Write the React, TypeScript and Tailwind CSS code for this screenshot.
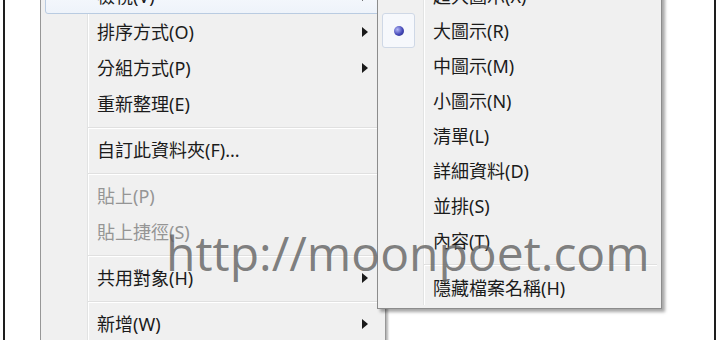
type Row =
  | { kind: 'item'; label: string; arrow?: boolean; disabled?: boolean; hot?: boolean; checked?: boolean }
  | { kind: 'sep' };

const MAIN: Row[] = [
  { kind: 'item', label: '檢視(V)', arrow: true, hot: true },
  { kind: 'item', label: '排序方式(O)', arrow: true },
  { kind: 'item', label: '分組方式(P)', arrow: true },
  { kind: 'item', label: '重新整理(E)' },
  { kind: 'sep' },
  { kind: 'item', label: '自訂此資料夾(F)...' },
  { kind: 'sep' },
  { kind: 'item', label: '貼上(P)', disabled: true },
  { kind: 'item', label: '貼上捷徑(S)', disabled: true },
  { kind: 'sep' },
  { kind: 'item', label: '共用對象(H)', arrow: true },
  { kind: 'sep' },
  { kind: 'item', label: '新增(W)', arrow: true },
];

const VIEW: Row[] = [
  { kind: 'item', label: '超大圖示(X)' },
  { kind: 'item', label: '大圖示(R)', checked: true },
  { kind: 'item', label: '中圖示(M)' },
  { kind: 'item', label: '小圖示(N)' },
  { kind: 'item', label: '清單(L)' },
  { kind: 'item', label: '詳細資料(D)' },
  { kind: 'item', label: '並排(S)' },
  { kind: 'item', label: '內容(T)' },
  { kind: 'sep' },
  { kind: 'item', label: '隱藏檔案名稱(H)' },
];

function Arrow() {
  return (
    <svg width="6" height="10" viewBox="0 0 6 10" className="shrink-0">
      <path d="M0 0 L6 5 L0 10 Z" fill="#1a1a1a" />
    </svg>
  );
}

function Radio() {
  return (
    <div className="w-[33px] h-full rounded-[3px] border border-[#cfd8e6] bg-[#f6f8fc] flex items-center justify-center">
      <span className="w-[10px] h-[10px] rounded-full bg-[radial-gradient(circle_at_35%_35%,#b4b8f7,#4549b8_55%,#24277a)]" />
    </div>
  );
}

function MenuRows({ rows, itemH, sepH, gutter }: { rows: Row[]; itemH: string; sepH: string; gutter: string }) {
  return (
    <>
      {rows.map((r, i) => {
        if (r.kind === 'sep') {
          return (
            <div key={i} className={`flex ${sepH}`}>
              <div className={`${gutter} shrink-0`} />
              <div className="flex-1 flex items-center border-l border-[#e2e3e3] shadow-[inset_1px_0_0_#ffffff]">
                <div className="w-full h-px bg-[#e0e0e0] shadow-[0_1px_0_#ffffff]" />
              </div>
            </div>
          );
        }
        if (r.hot) {
          return (
            <div
              key={i}
              className={`flex items-center ${itemH} rounded-[3px] border border-[#b9cbe1] bg-gradient-to-b from-[#fbfcfe] to-[#eef3fa]`}
            >
              <div className={`${gutter} shrink-0`} />
              <div className="flex-1 flex items-center pl-[9px] pr-[12px] text-[#1b1b1b]">
                <span className="flex-1">{r.label}</span>
                {r.arrow && <Arrow />}
              </div>
            </div>
          );
        }
        return (
          <div key={i} className={`flex ${itemH}`}>
            <div className={`${gutter} shrink-0 flex`}>{r.checked && <Radio />}</div>
            <div className={`flex-1 flex items-center border-l border-[#e2e3e3] shadow-[inset_1px_0_0_#ffffff] pl-[9px] pr-[13px] ${r.disabled ? 'text-[#959595]' : 'text-[#1b1b1b]'}`}>
              <span className="flex-1">{r.label}</span>
              {r.arrow && <Arrow />}
            </div>
          </div>
        );
      })}
    </>
  );
}

export default function App() {
  return (
    <div className="relative w-[720px] h-[340px] overflow-hidden bg-white font-['Noto_Sans','Noto_Sans_CJK_TC',sans-serif] text-[18px] leading-none">
      <div className="flex flex-col items-start ml-[3px] mr-[4px] h-full border-x-2 border-[#1e1e1e] pl-[35px]">
        <div className="w-[346px] -mt-[26px] border border-[#979797] bg-[#f0f0f0] px-[4px] py-[3px] shadow-[2px_2px_2px_rgba(0,0,0,0.3)]">
          <MenuRows rows={MAIN} itemH="h-[36px]" sepH="h-[10px]" gutter="w-[42px]" />
        </div>
      </div>

      <div className="absolute left-[377px] top-[-26px] w-[285px] border border-[#8c8c8c] bg-[#f0f0f0] px-[4px] py-[3px] shadow-[3px_3px_3px_rgba(0,0,0,0.35)]">
        <MenuRows rows={VIEW} itemH="h-[35px]" sepH="h-[12px]" gutter="w-[41px]" />
      </div>

      <div className="absolute left-[166px] top-[229px] font-['Open_Sans',sans-serif] text-[48px] leading-none text-[#606060]/80 whitespace-nowrap pointer-events-none">
        http://moonpoet.com
      </div>
    </div>
  );
}
